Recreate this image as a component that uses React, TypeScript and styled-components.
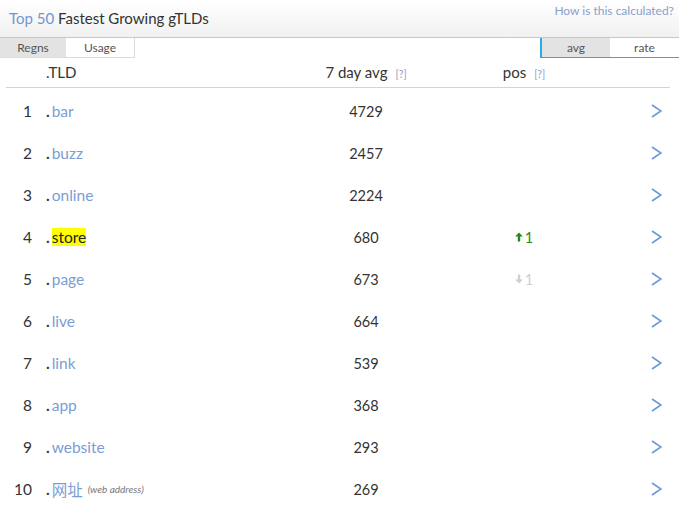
import React from "react";
import styled, { createGlobalStyle } from "styled-components";

const Global = createGlobalStyle`
  html, body { margin: 0; padding: 0; background: #fff; }
  body { font-family: Lato, "Noto Sans", "Noto Sans CJK SC", sans-serif; color: #333; }
`;

const Page = styled.div`
  width: 679px;
`;

const Header = styled.div`
  height: 38px;
  box-sizing: border-box;
  background: linear-gradient(#ffffff, #f1f1f1);
  border-bottom: 1px solid #c8c8c8;
  display: flex;
  justify-content: space-between;
  padding: 0 5px 0 9px;
`;

const Title = styled.div`
  font-size: 15px;
  line-height: 36px;
  color: #333;
`;

const TitleAccent = styled.span`
  color: #7096d2;
`;

const HowLink = styled.a`
  font-size: 12px;
  color: #8aa0c8;
  line-height: 22px;
  text-decoration: none;
`;

const TabBar = styled.div`
  display: flex;
  justify-content: space-between;
  height: 20px;
`;

const TabGroup = styled.div<{ $accent?: boolean }>`
  display: flex;
  box-sizing: border-box;
  border-left: ${(p) => (p.$accent ? "2px solid #2aaae6" : "none")};
  border-bottom: 1px solid ${(p) => (p.$accent ? "#2aaae6" : "#dcdcdc")};
  ${(p) => (p.$accent ? "" : "border-right: 1px solid #dcdcdc;")}
`;

const Tab = styled.div<{ $active?: boolean; $w: number }>`
  width: ${(p) => p.$w}px;
  text-align: center;
  font-size: 12px;
  line-height: 19px;
  color: #555;
  background: ${(p) => (p.$active ? "#e3e3e3" : "#fff")};
`;

const Grid = styled.div`
  display: grid;
  grid-template-columns: 32px 284px 100px 216px 1fr;
`;

const HeadRow = styled.div`
  display: contents;
`;

const HeadCell = styled.div<{ $align?: string; $pad?: number }>`
  height: 29px;
  line-height: 29px;
  font-size: 15px;
  color: #333;
  text-align: ${(p) => p.$align || "left"};
  padding-left: ${(p) => p.$pad || 0}px;
  border-bottom: 1px solid #d4d4d4;
  margin-bottom: 2px;
`;

const HeadEdge = styled(HeadCell)<{ $side: "l" | "r" }>`
  ${(p) => (p.$side === "l" ? "margin-left: 6px;" : "margin-right: 9px;")}
`;

const Help = styled.span`
  font-size: 10.5px;
  color: #8aa0c8;
  margin-left: 8px;
`;

const Cell = styled.div<{ $align?: string; $pad?: number }>`
  height: 42px;
  display: flex;
  align-items: center;
  justify-content: ${(p) => p.$align || "flex-start"};
  padding-left: ${(p) => p.$pad || 0}px;
  font-size: 14.5px;
  color: #333;
`;

const Num = styled(Cell)`
  font-size: 15.5px;
  color: #333;
`;

const Dot = styled.span`
  color: #333;
  font-size: 15.5px;
  font-weight: 700;
  margin-right: 2px;
`;

const TldName = styled.span<{ $hl?: boolean }>`
  font-size: 15.5px;
  color: ${(p) => (p.$hl ? "#222" : "#7a9dd3")};
  background: ${(p) => (p.$hl ? "#ffff00" : "transparent")};
`;

const Note = styled.span`
  font-size: 10px;
  font-style: italic;
  color: #777;
  margin-left: 5px;
`;

const Pos = styled.span<{ $up: boolean }>`
  display: inline-flex;
  align-items: center;
  gap: 2px;
  font-size: 14.5px;
  color: ${(p) => (p.$up ? "#1f8a1f" : "#cfcfcf")};
`;

const ChevronCell = styled(Cell)`
  justify-content: flex-end;
  padding-right: 17px;
  color: #6b9bd8;
`;

const Arrow = ({ up }: { up: boolean }) => (
  <svg width="8" height="10" viewBox="0 0 8 10">
    <g fill="currentColor" transform={up ? undefined : "rotate(180 4 5)"}>
      <path d="M4 0.5 L7.8 4.6 L5.2 4.6 L5.2 9.5 L2.8 9.5 L2.8 4.6 L0.2 4.6 Z" />
    </g>
  </svg>
);

const Chevron = () => (
  <svg width="11" height="14" viewBox="0 0 11 14">
    <polyline points="1,1 10,7 1,13" fill="none" stroke="currentColor" strokeWidth="1.7" />
  </svg>
);

type Row = { n: number; tld: string; v: number; pos?: { up: boolean; d: number }; hl?: boolean; note?: string };

const rows: Row[] = [
  { n: 1, tld: "bar", v: 4729 },
  { n: 2, tld: "buzz", v: 2457 },
  { n: 3, tld: "online", v: 2224 },
  { n: 4, tld: "store", v: 680, pos: { up: true, d: 1 }, hl: true },
  { n: 5, tld: "page", v: 673, pos: { up: false, d: 1 } },
  { n: 6, tld: "live", v: 664 },
  { n: 7, tld: "link", v: 539 },
  { n: 8, tld: "app", v: 368 },
  { n: 9, tld: "website", v: 293 },
  { n: 10, tld: "网址", v: 269, note: "(web address)" },
];

export default function App() {
  return (
    <Page>
      <Global />
      <Header>
        <Title>
          <TitleAccent>Top 50</TitleAccent> Fastest Growing gTLDs
        </Title>
        <HowLink href="#">How is this calculated?</HowLink>
      </Header>
      <TabBar>
        <TabGroup>
          <Tab $w={66} $active>Regns</Tab>
          <Tab $w={68}>Usage</Tab>
        </TabGroup>
        <TabGroup $accent>
          <Tab $w={68} $active>avg</Tab>
          <Tab $w={69}>rate</Tab>
        </TabGroup>
      </TabBar>
      <Grid>
        <HeadRow>
          <HeadEdge $side="l" />
          <HeadCell $pad={14}>.TLD</HeadCell>
          <HeadCell $align="center">
            7 day avg<Help>[?]</Help>
          </HeadCell>
          <HeadCell $align="center">
            pos<Help>[?]</Help>
          </HeadCell>
          <HeadEdge $side="r" />
        </HeadRow>
        {rows.map((r) => (
          <React.Fragment key={r.n}>
            <Num $align="flex-end">{r.n}</Num>
            <Cell $pad={14}>
              <Dot>.</Dot>
              <TldName $hl={r.hl}>{r.tld}</TldName>
              {r.note && <Note>{r.note}</Note>}
            </Cell>
            <Cell $align="center">{r.v}</Cell>
            <Cell $align="center">
              {r.pos && (
                <Pos $up={r.pos.up}>
                  <Arrow up={r.pos.up} />
                  {r.pos.d}
                </Pos>
              )}
            </Cell>
            <ChevronCell>
              <Chevron />
            </ChevronCell>
          </React.Fragment>
        ))}
      </Grid>
    </Page>
  );
}
